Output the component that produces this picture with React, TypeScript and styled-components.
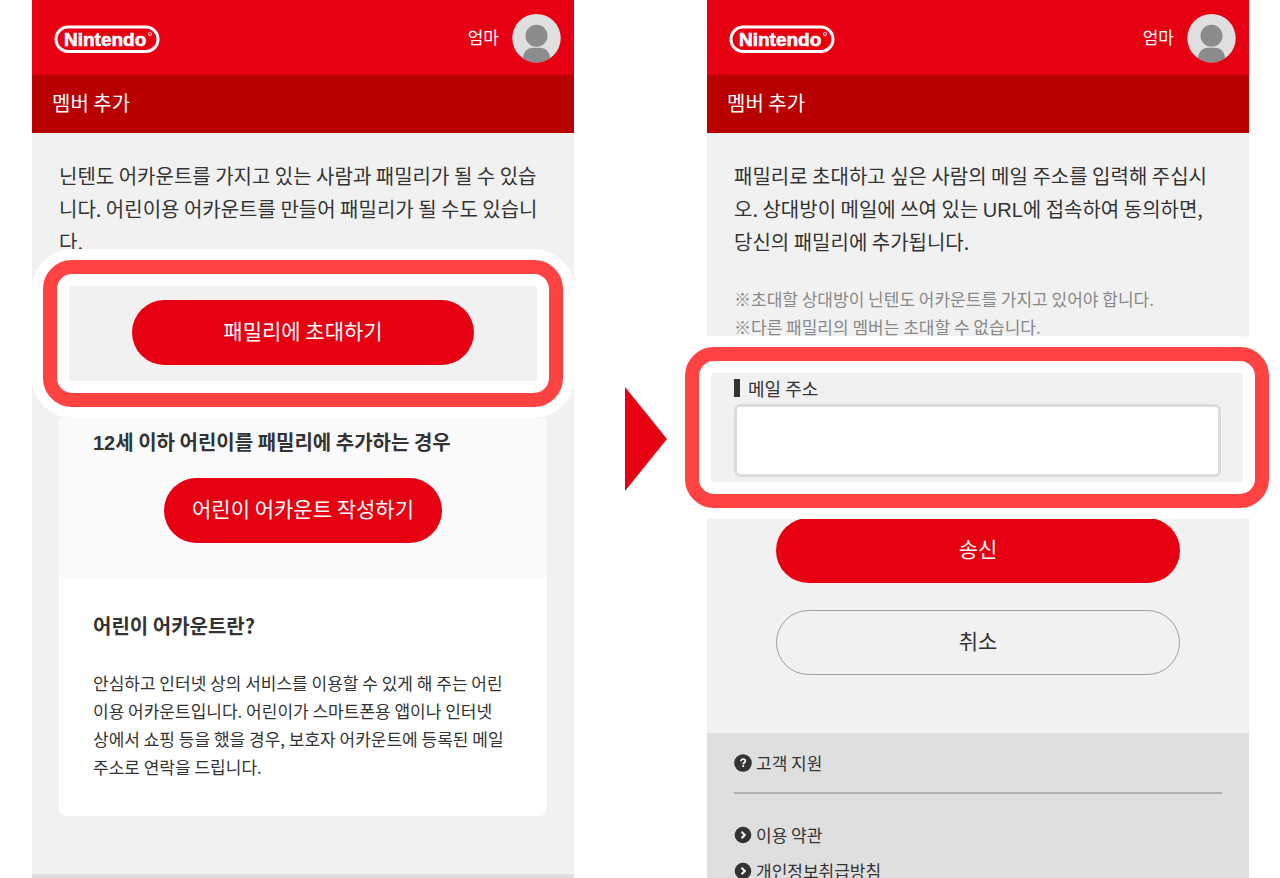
import React from "react";
import styled, { createGlobalStyle } from "styled-components";

const GlobalStyle = createGlobalStyle`
  *, *::before, *::after { box-sizing: border-box; }
  body {
    margin: 0;
    background: #fff;
    color: #333;
    font-family: "Noto Sans CJK KR", "Liberation Sans", sans-serif;
  }
  h1, h2, p, ul { margin: 0; padding: 0; }
`;

const Page = styled.main`
  display: grid;
  grid-template-columns: minmax(0, 1fr) 133px minmax(0, 1fr);
  grid-template-rows: 100vh;
  height: 100vh;
  padding: 0 31px 0 32px;
  overflow: hidden;
`;

const Screen = styled.section`
  display: flex;
  flex-direction: column;
  min-width: 0;
  background: #f1f1f1;
`;

const TopBar = styled.header`
  display: flex;
  flex: none;
  align-items: center;
  justify-content: space-between;
  height: 75px;
  padding: 1px 13px 0 22px;
  background: #e60012;
`;

const LogoLink = styled.a`
  display: block;
  height: 28px;
  margin-top: 2px;
`;

const Account = styled.div`
  display: flex;
  align-items: center;
  gap: 13px;
  color: #fff;
  font-size: 17px;
  line-height: 28px;
`;

const AccountName = styled.span`
  padding-bottom: 3px;
`;

const AvatarIcon = styled.svg`
  display: block;
  width: 49px;
  height: 49px;
`;

const ScreenTitle = styled.h1`
  flex: none;
  padding: 11px 20px 14px;
  background: #b80000;
  color: #fff;
  font-size: 20px;
  font-weight: 400;
  line-height: 33px;
`;

const Content = styled.div`
  flex: none;
  padding: 26px 27px 58px;
`;

const Lead = styled.p`
  font-size: 20px;
  line-height: 33px;
  white-space: nowrap;
`;

const Notes = styled.p`
  margin-top: 27px;
  color: #888;
  font-size: 17px;
  line-height: 28px;
  white-space: nowrap;
`;

const Latin = styled.span`
  font-family: "Liberation Sans", sans-serif;
  line-height: 1;
`;

const Highlight = styled.div<{ $bleed: string }>`
  position: relative;
  margin: ${(p) => p.$bleed};
  padding: 12px;
  border: 14px solid #ff4242;
  border-radius: 29px;
  background: #fff;
  box-shadow: 0 0 0 11px #fff;
`;

const HighlightBody = styled.div<{ $padding: string }>`
  padding: ${(p) => p.$padding};
  border-radius: 3px;
  background: #f1f1f1;
`;

const Button = styled.button<{ $width: number; $outline?: boolean }>`
  display: block;
  width: ${(p) => p.$width}px;
  max-width: 100%;
  height: 65px;
  margin: 0 auto;
  padding: 0 0 4px;
  border: ${(p) => (p.$outline ? "1px solid #a0a0a0" : "0")};
  border-radius: 33px;
  background: ${(p) => (p.$outline ? "transparent" : "#e60012")};
  color: ${(p) => (p.$outline ? "#333" : "#fff")};
  font-family: inherit;
  font-size: 21px;
  line-height: 33px;
  cursor: pointer;
`;

const Card = styled.div`
  border-radius: 0 0 8px 8px;
  background: #fff;
  overflow: hidden;
`;

const CardAction = styled.div`
  padding: 10px 34px 34px;
  background: #fafafa;
`;

const CardInfo = styled.div`
  padding: 35px 34px;
`;

const CardHeading = styled.h2<{ $gap: number }>`
  margin-bottom: ${(p) => p.$gap}px;
  font-size: 20px;
  font-weight: 700;
  line-height: 28px;
  white-space: nowrap;
`;

const CardText = styled.p`
  font-size: 17px;
  line-height: 28px;
  white-space: nowrap;
`;

const FieldLabel = styled.label`
  display: flex;
  align-items: center;
  gap: 8px;
  height: 30px;
  margin-bottom: 1px;
  font-size: 18px;
  line-height: 28px;

  &::before {
    content: "";
    width: 6px;
    height: 18px;
    background: #333;
  }
`;

const TextInput = styled.input`
  display: block;
  width: 100%;
  height: 73px;
  padding: 0 16px;
  border: 3px solid #dcdcdc;
  border-radius: 6px;
  background: #fff;
  color: inherit;
  font: inherit;
  font-size: 20px;
`;

const Actions = styled.div`
  display: flex;
  flex-direction: column;
  gap: 27px;
`;

const Footer = styled.footer`
  flex: 1 0 auto;
  padding: 16px 27px;
  background: #dfdfdf;
`;

const LinkList = styled.ul<{ $divided?: boolean }>`
  display: flex;
  flex-direction: column;
  gap: 8px;
  list-style: none;
  ${(p) =>
    p.$divided &&
    "margin-bottom: 27px; padding-bottom: 15px; border-bottom: 2px solid #b0b0b0;"}
`;

const FooterLink = styled.a`
  display: inline-flex;
  align-items: center;
  gap: 4px;
  height: 28px;
  color: #333;
  font-size: 17px;
  line-height: 28px;
  text-decoration: none;
  vertical-align: top;
`;

const StepArrow = styled.div`
  display: flex;
  align-items: center;
  padding-left: 51px;
`;

function Logo() {
  return (
    <LogoLink href="#" aria-label="Nintendo">
      <svg width="106" height="28" viewBox="0 0 106 28">
        <rect x="2" y="2" width="102" height="24.5" rx="12.2" fill="none" stroke="#fff" strokeWidth="3" />
        <text
          x="10"
          y="20.8"
          fill="#fff"
          stroke="#fff"
          strokeWidth="0.6"
          fontFamily="Liberation Sans, sans-serif"
          fontWeight="700"
          fontSize="19"
        >
          Nintendo
        </text>
        <circle cx="96" cy="9" r="1.7" fill="none" stroke="#fff" strokeWidth="0.7" />
        <circle cx="96" cy="9" r="0.6" fill="#fff" />
      </svg>
    </LogoLink>
  );
}

function Avatar() {
  return (
    <AvatarIcon viewBox="0 0 49 49" aria-hidden="true">
      <circle cx="24.5" cy="24.2" r="24.2" fill="#dfdfdf" />
      <circle cx="24.5" cy="21.700" r="11" fill="#8c8c8c" />
      <path
        d="M10.800 44.200C11.600 37.700 15.500 33.700 21 33.700h7c5.500 0 9.400 4 10.200 10.500A24.200 24.200 0 0 1 10.800 44.200z"
        fill="#8c8c8c"
      />
    </AvatarIcon>
  );
}

function Header() {
  return (
    <>
      <TopBar>
        <Logo />
        <Account>
          <AccountName>엄마</AccountName>
          <Avatar />
        </Account>
      </TopBar>
      <ScreenTitle>멤버 추가</ScreenTitle>
    </>
  );
}

function HelpIcon() {
  return (
    <svg width="18" height="18" viewBox="0 0 18 18" aria-hidden="true">
      <circle cx="9" cy="9" r="8.8" fill="#333" />
      <path
        d="M6.900 7.300C6.900 6 7.800 5.200 9.100 5.200s2.200.8 2.200 1.900c0 1.600-2.100 1.600-2.100 3.100"
        fill="none"
        stroke="#fff"
        strokeWidth="1.700"
      />
      <rect x="8.300" y="11.200" width="1.800" height="1.800" fill="#fff" />
    </svg>
  );
}

function ChevronIcon() {
  return (
    <svg width="18" height="18" viewBox="0 0 18 18" aria-hidden="true">
      <circle cx="9" cy="9" r="8.300" fill="#333" />
      <path d="M7.500 5.800L10.800 9l-3.300 3.200" fill="none" stroke="#fff" strokeWidth="2" />
    </svg>
  );
}

export default function App() {
  return (
    <>
      <GlobalStyle />
      <Page>
        <Screen>
          <Header />
          <Content>
            <Lead>
              닌텐도 어카운트를 가지고 있는 사람과 패밀리가 될 수 있습
              <br />
              니다. 어린이용 어카운트를 만들어 패밀리가 될 수도 있습니
              <br />
              다.
            </Lead>
            <Highlight $bleed="2px -16px 11px">
              <HighlightBody $padding="14px 0 16px">
                <Button type="button" $width={342}>패밀리에 초대하기</Button>
              </HighlightBody>
            </Highlight>
            <Card>
              <CardAction>
                <CardHeading $gap={22}>
                  <Latin>12</Latin>세 이하 어린이를 패밀리에 추가하는 경우
                </CardHeading>
                <Button type="button" $width={278}>어린이 어카운트 작성하기</Button>
              </CardAction>
              <CardInfo>
                <CardHeading $gap={29}>어린이 어카운트란?</CardHeading>
                <CardText>
                  안심하고 인터넷 상의 서비스를 이용할 수 있게 해 주는 어린
                  <br />
                  이용 어카운트입니다. 어린이가 스마트폰용 앱이나 인터넷
                  <br />
                  상에서 쇼핑 등을 했을 경우, 보호자 어카운트에 등록된 메일
                  <br />
                  주소로 연락을 드립니다.
                </CardText>
              </CardInfo>
            </Card>
          </Content>
          <Footer />
        </Screen>

        <StepArrow>
          <svg width="42" height="104" viewBox="0 0 42 104" aria-hidden="true">
            <path d="M0 0L42 52L0 104z" fill="#e60012" />
          </svg>
        </StepArrow>

        <Screen>
          <Header />
          <Content>
            <Lead>
              패밀리로 초대하고 싶은 사람의 메일 주소를 입력해 주십시
              <br />
              오. 상대방이 메일에 쓰여 있는 <Latin>URL</Latin>에 접속하여 동의하면,
              <br />
              당신의 패밀리에 추가됩니다.
            </Lead>
            <Notes>
              ※초대할 상대방이 닌텐도 어카운트를 가지고 있어야 합니다.
              <br />
              ※다른 패밀리의 멤버는 초대할 수 없습니다.
            </Notes>
            <Highlight $bleed="6px -47px 10px -49px">
              <HighlightBody $padding="0 22px 5px 23px">
                <FieldLabel htmlFor="invite-email">메일 주소</FieldLabel>
                <TextInput id="invite-email" type="email" />
              </HighlightBody>
            </Highlight>
            <Actions>
              <Button type="submit" $width={404}>송신</Button>
              <Button type="button" $width={404} $outline>취소</Button>
            </Actions>
          </Content>
          <Footer>
            <LinkList $divided>
              <li><FooterLink href="#"><HelpIcon />고객 지원</FooterLink></li>
            </LinkList>
            <LinkList>
              <li><FooterLink href="#"><ChevronIcon />이용 약관</FooterLink></li>
              <li><FooterLink href="#"><ChevronIcon />개인정보취급방침</FooterLink></li>
            </LinkList>
          </Footer>
        </Screen>
      </Page>
    </>
  );
}
